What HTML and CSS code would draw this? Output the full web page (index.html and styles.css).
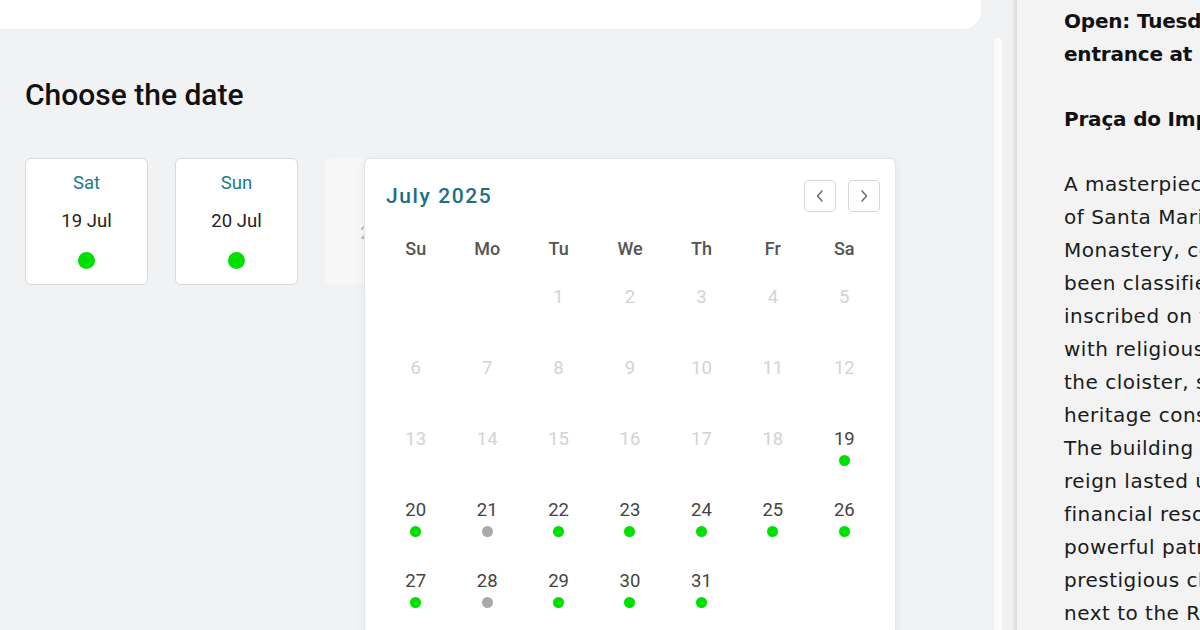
FILE: index.html
```html
<!DOCTYPE html>
<html lang="en">
<head>
<meta charset="utf-8">
<title>Choose the date</title>
<link rel="stylesheet" href="styles.css">
</head>
<body>
<div class="page">
  <main class="main">
    <div class="top-card"></div>
    <section class="booking">
      <h2 class="title">Choose the date</h2>
      <div class="cards">
        <div class="date-card">
          <span class="dow">Sat</span>
          <span class="dm">19 Jul</span>
          <span class="dot-lg"></span>
        </div>
        <div class="date-card">
          <span class="dow">Sun</span>
          <span class="dm">20 Jul</span>
          <span class="dot-lg"></span>
        </div>
        <div class="date-card faded">
          <span class="dm dm-faded">21 Jul</span>
        </div>
      </div>

      <div class="calendar">
        <div class="cal-head">
          <span class="month">July 2025</span>
          <div class="nav">
            <button class="nav-btn" aria-label="Previous month">
              <svg width="10" height="14" viewBox="0 0 10 14"><path d="M7 2 L2.5 7 L7 12" fill="none" stroke="#666" stroke-width="1.4" stroke-linecap="round" stroke-linejoin="round"/></svg>
            </button>
            <button class="nav-btn" aria-label="Next month">
              <svg width="10" height="14" viewBox="0 0 10 14"><path d="M3 2 L7.5 7 L3 12" fill="none" stroke="#666" stroke-width="1.4" stroke-linecap="round" stroke-linejoin="round"/></svg>
            </button>
          </div>
        </div>
        <div class="weekdays">
          <span>Su</span><span>Mo</span><span>Tu</span><span>We</span><span>Th</span><span>Fr</span><span>Sa</span>
        </div>
        <div class="days">
          <div class="day empty"></div>
          <div class="day empty"></div>
          <div class="day off"><span class="num">1</span></div>
          <div class="day off"><span class="num">2</span></div>
          <div class="day off"><span class="num">3</span></div>
          <div class="day off"><span class="num">4</span></div>
          <div class="day off"><span class="num">5</span></div>

          <div class="day off"><span class="num">6</span></div>
          <div class="day off"><span class="num">7</span></div>
          <div class="day off"><span class="num">8</span></div>
          <div class="day off"><span class="num">9</span></div>
          <div class="day off"><span class="num">10</span></div>
          <div class="day off"><span class="num">11</span></div>
          <div class="day off"><span class="num">12</span></div>

          <div class="day off"><span class="num">13</span></div>
          <div class="day off"><span class="num">14</span></div>
          <div class="day off"><span class="num">15</span></div>
          <div class="day off"><span class="num">16</span></div>
          <div class="day off"><span class="num">17</span></div>
          <div class="day off"><span class="num">18</span></div>
          <div class="day"><span class="num">19</span><span class="dot green"></span></div>

          <div class="day"><span class="num">20</span><span class="dot green"></span></div>
          <div class="day"><span class="num">21</span><span class="dot grey"></span></div>
          <div class="day"><span class="num">22</span><span class="dot green"></span></div>
          <div class="day"><span class="num">23</span><span class="dot green"></span></div>
          <div class="day"><span class="num">24</span><span class="dot green"></span></div>
          <div class="day"><span class="num">25</span><span class="dot green"></span></div>
          <div class="day"><span class="num">26</span><span class="dot green"></span></div>

          <div class="day"><span class="num">27</span><span class="dot green"></span></div>
          <div class="day"><span class="num">28</span><span class="dot grey"></span></div>
          <div class="day"><span class="num">29</span><span class="dot green"></span></div>
          <div class="day"><span class="num">30</span><span class="dot green"></span></div>
          <div class="day"><span class="num">31</span><span class="dot green"></span></div>
        </div>
      </div>
    </section>
  </main>

  <div class="scroll-col"><div class="scroll-thumb"></div></div>
  <div class="divider"></div>

  <aside class="info">
    <p class="strong">Open: Tuesday to Sunday, from 9:30 am to 6 pm (last<br>entrance at 5:30 pm)</p>
    <p class="strong">Praça do Império, 1400-206 Lisboa</p>
    <p class="body">A masterpiece of Manueline architecture, the Monastery<br>of Santa Maria de Belém, also known as the Jerónimos<br>Monastery, commissioned by King Manuel I, has<br>been classified as a National Monument and was<br>inscribed on the UNESCO World Heritage List. Together<br>with religious buildings such as the church and<br>the cloister, successive additions enriched the<br>heritage considered unique in the world.<br>The building work began in 1501 under King Manuel I, whose<br>reign lasted until 1521, and it drew on the vast<br>financial resources of the spice trade and on<br>powerful patrons who wished to be buried in so<br>prestigious church, in Belém,<br>next to the River Tagus.</p>
  </aside>
</div>
</body>
</html>
```

FILE: styles.css
```css
* { box-sizing: border-box; }

html, body {
  margin: 0;
  padding: 0;
  width: 1200px;
  height: 630px;
  overflow: hidden;
  background: #f1f2f4;
}

.page {
  display: flex;
  width: 1200px;
  height: 630px;
}

.main {
  width: 983px;
  flex: none;
  font-family: Roboto, "Liberation Sans", sans-serif;
}

.top-card {
  height: 29px;
  width: 981px;
  background: #ffffff;
  border-bottom-right-radius: 18px;
}

.booking {
  position: relative;
  padding: 46px 0 0 25px;
}

.title {
  margin: 0;
  font-size: 30px;
  line-height: 40px;
  font-weight: 500;
  color: #111;
}

.cards {
  display: flex;
  gap: 27px;
  margin-top: 43px;
}

.date-card {
  width: 123px;
  height: 127px;
  background: #fff;
  border: 1px solid #d8d9dc;
  border-radius: 6px;
  display: flex;
  flex-direction: column;
  align-items: center;
  padding-top: 12px;
}

.date-card.faded {
  background: #f7f7f8;
  border-color: #f4f4f5;
  margin-left: -1px;
}

.dow {
  font-size: 18.5px;
  line-height: 24px;
  color: #1b7a90;
}

.dm {
  margin-top: 14px;
  font-size: 18.5px;
  line-height: 24px;
  color: #222;
}

.dm-faded {
  margin-top: 50px;
  color: #b5b5b5;
}

.dot-lg {
  margin-top: 19px;
  width: 17px;
  height: 17px;
  border-radius: 50%;
  background: #00e000;
}

/* calendar popover */
.calendar {
  position: absolute;
  left: 364px;
  top: 129px;
  width: 532px;
  height: 520px;
  background: #fff;
  border: 1px solid #e3e4e6;
  border-radius: 6px;
  box-shadow: 0 2px 10px rgba(0,0,0,0.06);
  padding: 21px 15px 0 15px;
}

.cal-head {
  display: flex;
  justify-content: space-between;
  align-items: center;
  height: 32px;
  padding-left: 6px;
}

.month {
  font-size: 21px;
  font-weight: 500;
  letter-spacing: 1.6px;
  color: #1b7088;
}

.nav {
  display: flex;
  gap: 12px;
}

.nav-btn {
  width: 32px;
  height: 32px;
  padding: 0;
  background: #fff;
  border: 1px solid #d9d9d9;
  border-radius: 4px;
  display: flex;
  align-items: center;
  justify-content: center;
}

.weekdays {
  display: grid;
  grid-template-columns: repeat(7, 1fr);
  margin-top: 25px;
  height: 24px;
  font-size: 18px;
  line-height: 24px;
  font-weight: 500;
  color: #555;
  text-align: center;
}

.days {
  display: grid;
  grid-template-columns: repeat(7, 1fr);
  grid-auto-rows: 71px;
  margin-top: 25px;
}

.day {
  display: flex;
  flex-direction: column;
  align-items: center;
}

.num {
  font-size: 18.5px;
  line-height: 22px;
  color: #444;
}

.day.off .num {
  color: #d2d3d5;
}

.dot {
  margin-top: 5px;
  width: 11px;
  height: 11px;
  border-radius: 50%;
}

.dot.green { background: #00e000; }
.dot.grey { background: #a9a9a9; }

/* scrollbar column and divider */
.scroll-col {
  width: 30px;
  flex: none;
  padding: 38px 0 0 11px;
}

.scroll-thumb {
  width: 8px;
  height: 600px;
  background: #fbfbfc;
  border-radius: 4px 4px 0 0;
}

.divider {
  width: 4px;
  flex: none;
  background: linear-gradient(to right, #e9e9eb, #dcdcde);
}

.info {
  flex: 1;
  background: #f3f3f4;
  padding: 5px 0 0 47px;
  font-family: "DejaVu Sans", "Open Sans", sans-serif;
  font-size: 20px;
  line-height: 33px;
  color: #111;
  white-space: nowrap;
  overflow: hidden;
}

.info p {
  margin: 0 0 32px 0;
}

.info .strong {
  font-weight: 700;
  letter-spacing: -0.2px;
}

.info .body {
  color: #1a1a1a;
  letter-spacing: 0.5px;
}
```
